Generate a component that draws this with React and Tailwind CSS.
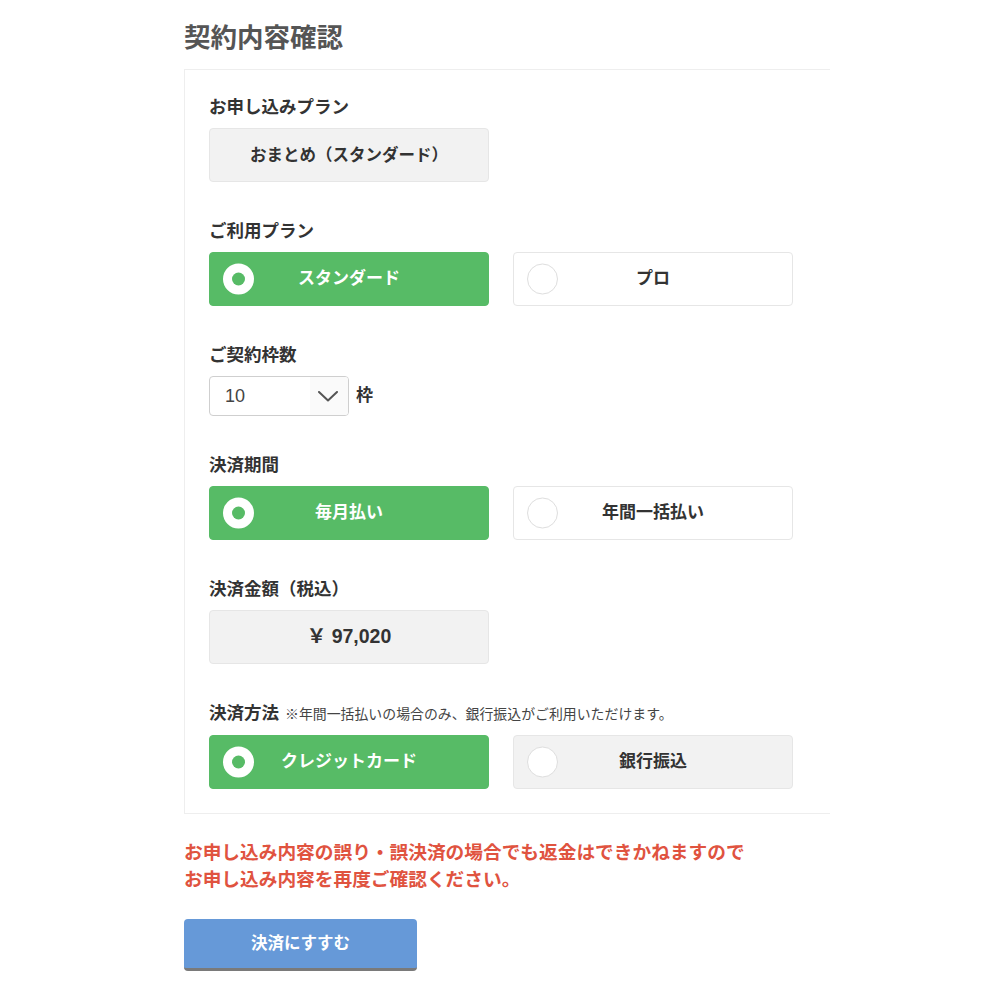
const FONT = { fontFamily: '"Liberation Sans", "Noto Sans CJK JP", sans-serif' };

function Label({ children, note }) {
  return (
    <div className="mb-[10px] flex items-baseline leading-[22px]">
      <span className="text-[17.5px] font-bold text-[#333]">{children}</span>
      {note && (
        <span className="ml-1.5 text-[13.9px] text-[#444]">{note}</span>
      )}
    </div>
  );
}

function StaticBox({ children, big }) {
  return (
    <div
      className={[
        "flex h-[54px] w-[280px] items-center justify-center rounded border border-[#e6e6e6] bg-[#f2f2f2] font-bold text-[#333]",
        big ? "text-[19.5px]" : "text-[16.5px]",
      ].join(" ")}
    >
      {children}
    </div>
  );
}

function RadioOption({ label, selected, disabled }) {
  const box = selected
    ? "border-[#57bb66] bg-[#57bb66] text-white"
    : disabled
      ? "border-[#e6e6e6] bg-[#f2f2f2] text-[#333]"
      : "border-[#e6e6e6] bg-white text-[#333]";
  return (
    <div
      className={`relative flex h-[54px] w-[280px] items-center justify-center rounded border text-[17px] font-bold ${box}`}
    >
      {selected ? (
        <span className="absolute left-[13px] top-1/2 flex h-[31px] w-[31px] -translate-y-1/2 items-center justify-center rounded-full bg-white">
          <span className="h-[13px] w-[13px] rounded-full bg-[#57bb66]" />
        </span>
      ) : (
        <span className="absolute left-[13px] top-1/2 h-[31px] w-[31px] -translate-y-1/2 rounded-full border border-[#dedede] bg-white" />
      )}
      {label}
    </div>
  );
}

function Section({ children }) {
  return <div className="mt-[38px] first:mt-0">{children}</div>;
}

export default function App() {
  return (
    <div className="min-h-[1000px] bg-white" style={FONT}>
      <div className="ml-[184px] w-[646px] pt-[20px] pb-8">
        <h1 className="mb-[13px] text-[26.5px] font-bold leading-[36px] text-[#555]">
          契約内容確認
        </h1>

        <div className="border-y border-l border-[#eeeeee] px-6 pt-[26px] pb-6">
          <Section>
            <Label>お申し込みプラン</Label>
            <StaticBox>おまとめ（スタンダード）</StaticBox>
          </Section>

          <Section>
            <Label>ご利用プラン</Label>
            <div className="flex gap-6">
              <RadioOption label="スタンダード" selected />
              <RadioOption label="プロ" />
            </div>
          </Section>

          <Section>
            <Label>ご契約枠数</Label>
            <div className="flex items-center">
              <div className="flex h-10 w-[140px] items-stretch overflow-hidden rounded border border-[#cfcfcf] bg-white">
                <span className="flex flex-1 items-center pl-[15px] text-[18px] text-[#444]">
                  10
                </span>
                <span className="flex w-[38px] items-center justify-center bg-[#fafafa] pr-[2px]">
                  <svg width="20" height="11" viewBox="0 0 20 11" fill="none">
                    <polyline
                      points="1,1 10,9.5 19,1"
                      stroke="#555"
                      strokeWidth="2"
                      strokeLinecap="round"
                      strokeLinejoin="round"
                    />
                  </svg>
                </span>
              </div>
              <span className="ml-[7px] text-[17px] font-bold text-[#333]">枠</span>
            </div>
          </Section>

          <Section>
            <Label>決済期間</Label>
            <div className="flex gap-6">
              <RadioOption label="毎月払い" selected />
              <RadioOption label="年間一括払い" />
            </div>
          </Section>

          <Section>
            <Label>決済金額（税込）</Label>
            <StaticBox big>￥ 97,020</StaticBox>
          </Section>

          <Section>
            <Label note="※年間一括払いの場合のみ、銀行振込がご利用いただけます。">
              決済方法
            </Label>
            <div className="flex gap-6">
              <RadioOption label="クレジットカード" selected />
              <RadioOption label="銀行振込" disabled />
            </div>
          </Section>
        </div>

        <p className="mt-[25px] text-[18.7px] font-bold leading-[27px] text-[#e0533f]">
          お申し込み内容の誤り・誤決済の場合でも返金はできかねますので
          <br />
          お申し込み内容を再度ご確認ください。
        </p>

        <button
          type="button"
          className="mt-[26px] flex h-[52px] w-[233px] items-center justify-center rounded border-b-[3px] border-[#7a7a7a] bg-[#6699d8] text-[16.5px] font-bold text-white"
        >
          決済にすすむ
        </button>
      </div>
    </div>
  );
}
